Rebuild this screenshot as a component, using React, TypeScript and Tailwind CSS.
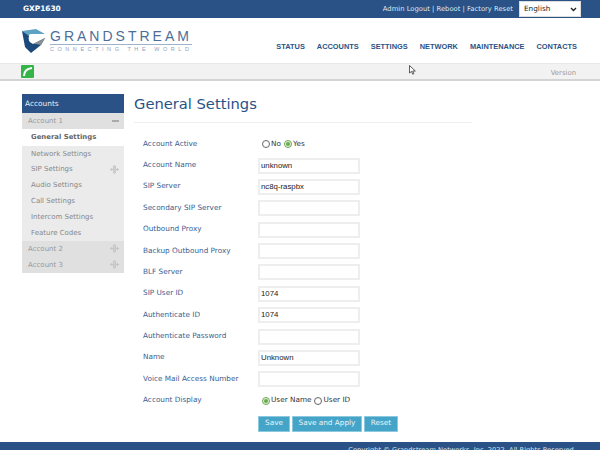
const NAV = ['STATUS', 'ACCOUNTS', 'SETTINGS', 'NETWORK', 'MAINTENANCE', 'CONTACTS'];

const SUB_ITEMS = [
  { label: 'Network Settings', plus: false },
  { label: 'SIP Settings', plus: true },
  { label: 'Audio Settings', plus: false },
  { label: 'Call Settings', plus: false },
  { label: 'Intercom Settings', plus: false },
  { label: 'Feature Codes', plus: false },
];

const FIELDS = [
  { label: 'Account Name', value: 'unknown' },
  { label: 'SIP Server', value: 'nc8q-raspbx' },
  { label: 'Secondary SIP Server', value: '' },
  { label: 'Outbound Proxy', value: '' },
  { label: 'Backup Outbound Proxy', value: '' },
  { label: 'BLF Server', value: '' },
  { label: 'SIP User ID', value: '1074' },
  { label: 'Authenticate ID', value: '1074' },
  { label: 'Authenticate Password', value: '' },
  { label: 'Name', value: 'Unknown' },
  { label: 'Voice Mail Access Number', value: '' },
];

function Logo() {
  return (
    <svg width="24" height="24" viewBox="0 0 24 24">
      <path d="M0 2 L14 0 L23 5 L8 5 Q5 8 9 11 L6 8 Z" fill="#5fa3c4" />
      <path d="M0 2 L7 7 Q5 12 11 15 L23 9 L19 16 L9 24 L3 18 Z" fill="#1d4a7c" />
      <path d="M11 15 L23 9 L19 16 L14 15 Z" fill="#8a8f94" />
    </svg>
  );
}

function MoveIcon() {
  return (
    <svg width="9" height="9" viewBox="0 0 9 9" fill="#d4d4d4" stroke="#b8b8b8" strokeWidth="0.6">
      <path d="M4.5 .3L6 2H5.3v2.2h2.2v-.7l1.2 1-1.2 1v-.7H5.3V7h.7L4.5 8.7 3 7h.7V4.8H1.5v.7L.3 4.5l1.2-1v.7h2.2V2H3z" />
    </svg>
  );
}

function Radio({ checked, label }: { checked?: boolean; label: string }) {
  return (
    <span className="flex items-center gap-[1px]">
      <span
        className={`box-content flex h-[6px] w-[6px] items-center justify-center rounded-full border ${
          checked ? 'border-[#6aa84f] bg-[#e8f3e0]' : 'border-[#666] bg-white'
        }`}
      >
        {checked && <span className="h-[4px] w-[4px] rounded-full bg-[#6aa84f]" />}
      </span>
      <span>{label}</span>
    </span>
  );
}

function Row({ label, children }: { label: string; children: React.ReactNode }) {
  return (
    <div className="flex h-[21.38px] items-center">
      <div className="w-[115px] text-[#3b6090]">{label}</div>
      {children}
    </div>
  );
}

export default function App() {
  return (
    <div className="relative h-[450px] w-[600px] overflow-hidden bg-white font-['DejaVu_Sans',sans-serif] text-[7.3px] text-[#444]">
      <div className="flex h-[18px] items-center justify-between bg-[#2a5286] pl-[23px] pr-[19px] text-white">
        <span className="text-[7.4px] font-bold">GXP1630</span>
        <div className="flex items-center">
          <span className="mr-[6px] text-[6.8px] text-[#dfe6ef]">Admin Logout | Reboot | Factory Reset</span>
          <div className="flex h-[16px] w-[62px] items-center justify-between border border-[#ddd] bg-white pl-[4px] pr-[3px] text-[7.3px] text-[#222]">
            English
            <svg width="7" height="5" viewBox="0 0 7 5" fill="none" stroke="#222" strokeWidth="1.4">
              <path d="M1 1l2.5 2.5L6 1" />
            </svg>
          </div>
        </div>
      </div>

      <div className="flex h-[45px] justify-between pl-[22px] pr-[23px]">
        <div className="flex items-start pt-[11px]">
          <Logo />
          <div className="ml-[4px] w-[142px]">
            <div className="font-['Liberation_Sans',sans-serif] text-[14px] leading-[14px] tracking-[3px] whitespace-nowrap text-[#4b6f9a]">GRANDSTREAM</div>
            <div className="mt-[1px] border-t border-[#9fb2c9] pt-[1px] font-['Liberation_Sans',sans-serif] text-[5.5px] leading-[7px] tracking-[3.55px] whitespace-nowrap text-[#8ea3bc]">
              CONNECTING THE WORLD
            </div>
          </div>
        </div>
        <div className="flex gap-[12px] pt-[24px] font-['Liberation_Sans',sans-serif] text-[7.4px] leading-[10px] font-bold text-[#2a5286]">
          {NAV.map((item) => (
            <span key={item}>{item}</span>
          ))}
        </div>
      </div>

      <div className="relative flex h-[18px] items-center justify-between border-t border-b-2 border-t-[#e8e8e8] border-b-[#d4d4d4] bg-[#f2f2f2] pl-[21px] pr-[24px]">
        <div className="flex h-[13px] w-[13px] items-center justify-center rounded-[1px] bg-[#35b44a]">
          <svg width="11" height="11" viewBox="0 0 11 11" fill="none" stroke="white" strokeWidth="2">
            <path d="M2 10 Q2 3 10 2" />
          </svg>
        </div>
        <span className="pt-[4px] text-[6.9px] text-[#999]">Version</span>
        <svg className="absolute top-[1px] left-[409px]" width="7" height="10" viewBox="0 0 7 10" fill="white" stroke="#333" strokeWidth="0.8">
          <path d="M.5.5v7.5l2-1.6 1.2 2.8 1.2-.6-1.2-2.6h2.6z" />
        </svg>
      </div>

      <div className="flex pt-[13px] pl-[22px]">
        <div className="w-[102px]">
          <div className="flex h-[19px] items-center bg-[#2a5286] pl-[3px] text-[7.4px] text-[#e8edf4]">Accounts</div>
          <div className="flex h-[16px] items-center justify-between bg-[#e0e0e0] pr-[5px] pl-[6px] text-[7px] text-[#999]">
            Account 1
            <span className="h-[2px] w-[7px] bg-[#aaa]" />
          </div>
          <div className="flex h-[17px] items-center bg-white pl-[9px] text-[6.9px] font-bold text-[#666]">General Settings</div>
          <div className="bg-[#ebebeb]">
            {SUB_ITEMS.map((item) => (
              <div key={item.label} className="flex h-[15.8px] items-center justify-between pr-[5px] pl-[9px] text-[7px] text-[#888]">
                {item.label}
                {item.plus && <MoveIcon />}
              </div>
            ))}
          </div>
          {['Account 2', 'Account 3'].map((name) => (
            <div key={name} className="flex h-[16px] items-center justify-between bg-[#e0e0e0] pr-[5px] pl-[6px] text-[7px] text-[#999]">
              {name}
              <MoveIcon />
            </div>
          ))}
        </div>

        <div className="ml-[10px] flex-1">
          <h1 className="h-[28px] w-[338px] text-[14.7px] leading-[20px] text-[#2a5286]">General Settings</h1>
          <div className="w-[338px] border-t border-[#eee]" />
          <div className="mt-[10.5px] pl-[9px]">
            <Row label="Account Active">
              <div className="flex gap-[3px] pl-[4px] text-[#333]">
                <Radio label="No" />
                <Radio checked label="Yes" />
              </div>
            </Row>
            {FIELDS.map((field) => (
              <Row key={field.label} label={field.label}>
                <div className="flex h-[16px] w-[102px] items-center border-2 border-[#eee] bg-white pl-[1px] font-['Liberation_Sans',sans-serif] text-[7.8px] text-[#222]">
                  {field.value}
                </div>
              </Row>
            ))}
            <Row label="Account Display">
              <div className="flex gap-[3px] pl-[4px] text-[#333]">
                <Radio checked label="User Name" />
                <Radio label="User ID" />
              </div>
            </Row>
            <div className="mt-[4.5px] flex gap-[2px] pl-[115px] text-[#e8f4f8]">
              <span className="flex h-[16px] w-[32px] items-center justify-center border border-[#8cc8de] bg-[#45a5c8]">Save</span>
              <span className="flex h-[16px] w-[70px] items-center justify-center border border-[#8cc8de] bg-[#45a5c8]">Save and Apply</span>
              <span className="flex h-[16px] w-[34px] items-center justify-center border border-[#8cc8de] bg-[#45a5c8]">Reset</span>
            </div>
          </div>
        </div>
      </div>

      <div className="absolute top-[442px] left-0 h-[8px] w-full overflow-hidden bg-[#2a5286] pt-[4px] pr-[24px] text-right text-[6.7px] leading-[8px] whitespace-nowrap text-[#dfe6ef]">
        Copyright © Grandstream Networks, Inc. 2022. All Rights Reserved.
      </div>
    </div>
  );
}
